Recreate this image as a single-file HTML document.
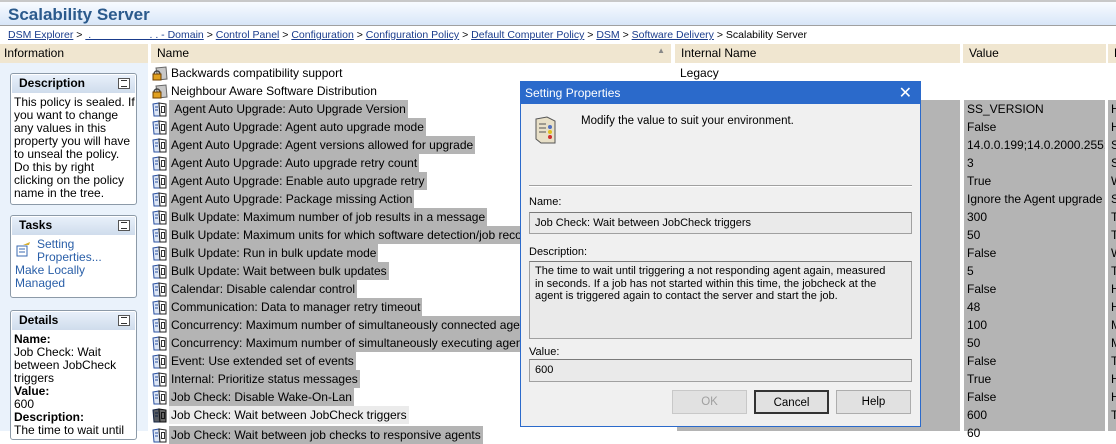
<!DOCTYPE html>
<html><head><style>
*{margin:0;padding:0;box-sizing:border-box}
body{width:1116px;height:431px;overflow:hidden;background:#fff;font-family:"Liberation Sans",sans-serif;font-size:12px;color:#000;position:relative}
.abs{position:absolute}
#title{left:0;top:0;width:1116px;height:26px;border-top:2px solid #c8c8c8;border-bottom:1px solid #a0a0a0;background:linear-gradient(#f8fbff,#d8e6f8);}
#title span{position:absolute;left:8px;top:3px;font-size:17px;font-weight:bold;color:#2b5a8c}
#bc{left:8px;top:29px;font-size:10.5px;color:#000;white-space:nowrap}
#bc a{color:#1a3c8c;text-decoration:underline}
.hdr{top:44px;height:19px;background:#f0e6d0;padding:2px 0 0 6px;font-size:12px}
#left{left:0;top:63px;width:148px;height:368px;background:#eaf2fb}
.box{position:absolute;left:10px;width:127px;background:#fff;border:1px solid #8c9aa8;border-radius:3px;font-size:12px;line-height:13px}
.box .bh{height:18px;margin:1px;background:linear-gradient(#e8f0fa,#cfdcec);font-weight:bold;font-size:12px;padding:2px 0 0 7px;position:relative}
.box .bh i{position:absolute;right:5px;top:3px;width:12px;height:11px;border:1px solid #555;background:#fff;font-style:normal}
.box .bh i:before{content:"";position:absolute;left:2px;right:2px;top:1px;border-top:1px solid #333}
.box .bh i:after{content:"";position:absolute;left:2px;right:2px;bottom:1px;border-top:1px solid #333}
.box .bt{padding:2px 3px;white-space:nowrap}
.row{position:absolute;left:150px;height:18px;white-space:nowrap}
.row .ic{position:absolute;left:2px;top:1px;width:16px;height:16px}
.row .t{position:absolute;left:19px;top:0;height:18px;line-height:18px;padding:0 2px;background:#b4b4b4}
.g{position:absolute;background:#b4b4b4;height:18px;line-height:18px;padding-left:4px;white-space:nowrap;overflow:hidden}
#dlg{left:520px;top:81px;width:401px;height:346px;border:1px solid #2b6acb;background:#f0f0f0}
#dlg .tb{height:22px;background:#2b6acb;color:#fff;font-size:12px;padding:4px 0 0 4px;position:relative}
.fld{position:absolute;left:8px;width:383px;border:1px solid #a0a0a0;border-top-color:#7a7a7a;background:#eaeaea;font-size:11px;padding:3px 5px;line-height:12.5px;white-space:nowrap}
.btn{position:absolute;top:308px;width:75px;height:24px;border:1px solid #adadad;background:#e1e1e1;text-align:center;line-height:22px;font-size:11.5px}
</style></head><body>
<div id="title" class="abs"><span>Scalability Server</span></div>
<div id="bc" class="abs"><a>DSM Explorer</a> &gt; <a>&nbsp;.&nbsp;&nbsp;&nbsp;&nbsp;&nbsp;&nbsp;&nbsp;&nbsp;&nbsp;&nbsp;&nbsp;&nbsp;&nbsp;&nbsp;&nbsp;&nbsp;&nbsp;&nbsp;&nbsp;&nbsp;. . - Domain</a> &gt; <a>Control Panel</a> &gt; <a>Configuration</a> &gt; <a>Configuration Policy</a> &gt; <a>Default Computer Policy</a> &gt; <a>DSM</a> &gt; <a>Software Delivery</a> &gt; Scalability Server</div>
<div class="abs hdr" style="left:0;width:148px;padding-left:4px">Information</div>
<div class="abs hdr" style="left:151px;width:520px">Name<span style="position:absolute;right:6px;top:2px;font-size:8px;color:#888">▲</span></div>
<div class="abs hdr" style="left:675px;width:285px">Internal Name</div>
<div class="abs hdr" style="left:963px;width:143px">Value</div>
<div class="abs hdr" style="left:1108px;width:10px">D</div>
<div id="left" class="abs"></div>
<div class="box" style="top:73px;height:132px"><div class="bh">Description<i></i></div><div class="bt">This policy is sealed. If<br>you want to change<br>any values in this<br>property you will have<br>to unseal the policy.<br>Do this by right<br>clicking on the policy<br>name in the tree.</div></div>
<div class="box" style="top:215px;height:83px"><div class="bh">Tasks<i></i></div><div class="bt" style="color:#2a5fa8;padding-left:4px"><div style="position:relative;padding-left:22px">
<svg style="position:absolute;left:0;top:3px" width="16" height="16"><rect x="2" y="5" width="10" height="10" fill="#fff" stroke="#3a6ab0"/><line x1="4" y1="8" x2="10" y2="8" stroke="#3a6ab0"/><line x1="4" y1="11" x2="10" y2="11" stroke="#3a6ab0"/><path d="M8 4 L15 1 L14 4 Z" fill="#d8b030"/></svg>Setting<br>Properties...</div>Make Locally<br>Managed</div></div>
<div class="box" style="top:310px;height:130px"><div class="bh">Details<i></i></div><div class="bt"><b>Name:</b><br>Job Check: Wait<br>between JobCheck<br>triggers<br><b>Value:</b><br>600<br><b>Description:</b><br>The time to wait until</div></div>

<div class="g" style="left:677px;top:100px;width:283px;height:331px;padding:0"></div>
<div class="g" style="left:964px;top:100px;width:141px;height:331px;padding:0"></div>
<div class="g" style="left:1108px;top:100px;width:10px;height:331px;padding:0"></div>
<div class="abs" style="left:680px;top:64px;line-height:18px">Legacy</div>
<div class="abs" style="left:967px;top:100px;width:138px;overflow:hidden;white-space:nowrap;line-height:18px">SS_VERSION<br>False<br>14.0.0.199;14.0.2000.255;...<br>3<br>True<br>Ignore the Agent upgrade<br>300<br>50<br>False<br>5<br>False<br>48<br>100<br>50<br>False<br>True<br>False<br>600<br>60</div>
<div class="abs" style="left:1111px;top:100px;line-height:18px">H<br>H<br>S<br>S<br>W<br>S<br>T<br>T<br>W<br>T<br>H<br>H<br>M<br>M<br>T<br>H<br>H<br>T</div>

<svg width="0" height="0" style="position:absolute"><defs>
<symbol id="pol" viewBox="0 0 16 16"><path d="M1 3 L7 2 L8 15 L2 15 Z" fill="#dde6f5" stroke="#2a50a0"/><path d="M7 2 L14 3 L14 15 L8 15 Z" fill="#fff" stroke="#222"/><rect x="9" y="5" width="4" height="7" fill="#333"/><rect x="10" y="6" width="2" height="5" fill="#fff"/><line x1="3" y1="6" x2="6" y2="6" stroke="#2a50a0"/><line x1="3" y1="9" x2="6" y2="9" stroke="#2a50a0"/></symbol>
<symbol id="lock" viewBox="0 0 16 16"><path d="M4 3 L14 2 L15 14 L6 15 Z" fill="#c8c8c8" stroke="#666"/><path d="M2 9 a3 3 0 0 1 6 0" fill="none" stroke="#444" stroke-width="1.5"/><rect x="1" y="9" width="8" height="6" fill="#e0a020" stroke="#704000"/></symbol>
</defs></svg>

<div class="row" style="top:64px"><svg class="ic"><use href="#lock"/></svg><span class="t" style="background:none">Backwards compatibility support</span></div>
<div class="row" style="top:82px"><svg class="ic"><use href="#lock"/></svg><span class="t" style="background:none">Neighbour Aware Software Distribution</span></div>
<div class="row" style="top:100px"><svg class="ic"><use href="#pol"/></svg><span class="t">&nbsp;Agent Auto Upgrade: Auto Upgrade Version</span></div>
<div class="row" style="top:118px"><svg class="ic"><use href="#pol"/></svg><span class="t">Agent Auto Upgrade: Agent auto upgrade mode</span></div>
<div class="row" style="top:136px"><svg class="ic"><use href="#pol"/></svg><span class="t">Agent Auto Upgrade: Agent versions allowed for upgrade</span></div>
<div class="row" style="top:154px"><svg class="ic"><use href="#pol"/></svg><span class="t">Agent Auto Upgrade: Auto upgrade retry count</span></div>
<div class="row" style="top:172px"><svg class="ic"><use href="#pol"/></svg><span class="t">Agent Auto Upgrade: Enable auto upgrade retry</span></div>
<div class="row" style="top:190px"><svg class="ic"><use href="#pol"/></svg><span class="t">Agent Auto Upgrade: Package missing Action</span></div>
<div class="row" style="top:208px"><svg class="ic"><use href="#pol"/></svg><span class="t">Bulk Update: Maximum number of job results in a message</span></div>
<div class="row" style="top:226px"><svg class="ic"><use href="#pol"/></svg><span class="t" style="width:360px;overflow:hidden">Bulk Update: Maximum units for which software detection/job records</span></div>
<div class="row" style="top:244px"><svg class="ic"><use href="#pol"/></svg><span class="t">Bulk Update: Run in bulk update mode</span></div>
<div class="row" style="top:262px"><svg class="ic"><use href="#pol"/></svg><span class="t">Bulk Update: Wait between bulk updates</span></div>
<div class="row" style="top:280px"><svg class="ic"><use href="#pol"/></svg><span class="t">Calendar: Disable calendar control</span></div>
<div class="row" style="top:298px"><svg class="ic"><use href="#pol"/></svg><span class="t">Communication: Data to manager retry timeout</span></div>
<div class="row" style="top:316px"><svg class="ic"><use href="#pol"/></svg><span class="t" style="width:360px;overflow:hidden">Concurrency: Maximum number of simultaneously connected agents</span></div>
<div class="row" style="top:334px"><svg class="ic"><use href="#pol"/></svg><span class="t" style="width:360px;overflow:hidden">Concurrency: Maximum number of simultaneously executing agents</span></div>
<div class="row" style="top:352px"><svg class="ic"><use href="#pol"/></svg><span class="t">Event: Use extended set of events</span></div>
<div class="row" style="top:370px"><svg class="ic"><use href="#pol"/></svg><span class="t">Internal: Prioritize status messages</span></div>
<div class="row" style="top:388px"><svg class="ic"><use href="#pol"/></svg><span class="t">Job Check: Disable Wake-On-Lan</span></div>
<div class="row" style="top:406px"><svg class="ic" style="filter:brightness(0.4)"><use href="#pol"/></svg><span class="t" style="background:#ebebeb">Job Check: Wait between JobCheck triggers</span></div>
<div class="row" style="top:426px"><svg class="ic"><use href="#pol"/></svg><span class="t">Job Check: Wait between job checks to responsive agents</span></div>

<div id="dlg" class="abs">
<div class="tb">Setting Properties<span style="position:absolute;right:8px;top:1px;font-size:16px">✕</span></div>
<svg class="abs" style="left:12px;top:33px" width="26" height="30"><path d="M3 4 L14 2 L22 6 L22 28 L8 28 L3 24 Z" fill="#e8e0c8" stroke="#555"/><circle cx="17" cy="12" r="2" fill="#5070c0"/><circle cx="17" cy="17" r="2" fill="#e0c020"/><circle cx="17" cy="22" r="2" fill="#d03030"/><line x1="6" y1="9" x2="13" y2="9" stroke="#555"/><line x1="6" y1="13" x2="13" y2="13" stroke="#555"/><line x1="6" y1="17" x2="13" y2="17" stroke="#555"/></svg>
<div class="abs" style="left:60px;top:33px;font-size:11.5px">Modify the value to suit your environment.</div>
<div class="abs" style="left:8px;top:103px;width:383px;border-top:1px solid #a0a0a0;border-bottom:1px solid #fff"></div>
<div class="abs" style="left:8px;top:114px;font-size:11px">Name:</div>
<div class="fld" style="top:130px;height:22px;padding-top:4px">Job Check: Wait between JobCheck triggers</div>
<div class="abs" style="left:8px;top:164px;font-size:11px">Description:</div>
<div class="fld" style="top:179px;height:78px">The time to wait until triggering a not responding agent again, measured<br>in seconds. If a job has not started within this time, the jobcheck at the<br>agent is triggered again to contact the server and start the job.</div>
<div class="abs" style="left:8px;top:264px;font-size:11px">Value:</div>
<div class="fld" style="top:277px;height:23px;padding-top:4px">600</div>
<div class="btn" style="left:151px;color:#a0a0a0;border-color:#c8c8c8">OK</div>
<div class="btn" style="left:233px;border:2px solid #333">Cancel</div>
<div class="btn" style="left:315px">Help</div>
</div>
</body></html>
